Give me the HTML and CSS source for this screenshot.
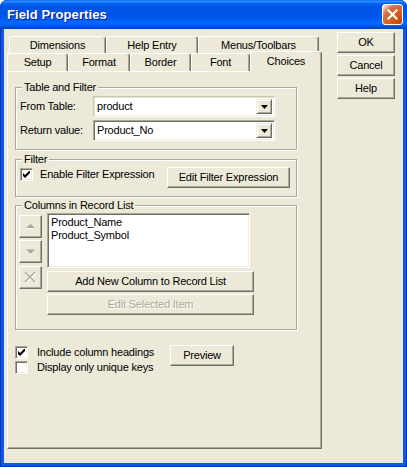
FILE: index.html
```html
<!DOCTYPE html>
<html lang="en">
<head>
<meta charset="utf-8">
<title>Field Properties</title>
<link rel="stylesheet" href="styles.css">
</head>
<body>
<div class="window">
  <header class="titlebar">
    <span class="title">Field Properties</span>
    <button class="close" aria-label="Close">
      <svg width="11" height="11" viewBox="0 0 11 11"><path d="M1.5 1.5 L9.5 9.5 M9.5 1.5 L1.5 9.5" stroke="#fff" stroke-width="2.2" stroke-linecap="square"/></svg>
    </button>
  </header>
  <div class="client">
    <div class="tabctl">
      <div class="tabrow tabrow-back">
        <div class="tab w-dim">Dimensions</div>
        <div class="tab w-help">Help Entry</div>
        <div class="tab w-menus">Menus/Toolbars</div>
      </div>
      <div class="tabrow tabrow-front">
        <div class="tab w-setup">Setup</div>
        <div class="tab w-format">Format</div>
        <div class="tab w-border">Border</div>
        <div class="tab w-font">Font</div>
        <div class="tab tab-active w-choices">Choices</div>
      </div>
      <div class="panel">
        <fieldset class="group">
          <legend>Table and Filter</legend>
          <div class="field-grid">
            <label class="field-label">From Table:</label>
            <div class="combo combo-plain">
              <span class="combo-value">product</span>
              <span class="combo-drop"><svg width="7" height="4" viewBox="0 0 7 4"><path d="M0 0 H7 L3.5 4 Z" fill="#000"/></svg></span>
            </div>
            <label class="field-label">Return value:</label>
            <div class="combo">
              <span class="combo-value">Product_No</span>
              <span class="combo-drop"><svg width="7" height="4" viewBox="0 0 7 4"><path d="M0 0 H7 L3.5 4 Z" fill="#000"/></svg></span>
            </div>
          </div>
        </fieldset>

        <fieldset class="group group-filter">
          <legend>Filter</legend>
          <div class="filter-row">
            <label class="check check-filter">
              <span class="check-box"><svg width="7" height="7" viewBox="0 0 7 7"><path d="M0 2 L2 4 L6 0 L7 0 L7 2 L2 7 L0 5 Z" fill="#000"/></svg></span>
              <span>Enable Filter Expression</span>
            </label>
            <button class="btn btn-filter">Edit Filter Expression</button>
          </div>
        </fieldset>

        <fieldset class="group group-columns">
          <legend>Columns in Record List</legend>
          <div class="columns-grid">
            <div class="mover">
              <button class="btn btn-icon" aria-label="Move up"><svg width="9" height="6" viewBox="0 0 9 6"><path d="M1 5 L4.5 1.5 L8 5 Z" fill="#fff"/><path d="M0 4 L4.5 0 L9 4 Z" fill="#ACA899"/></svg></button>
              <button class="btn btn-icon" aria-label="Move down"><svg width="9" height="6" viewBox="0 0 9 6"><path d="M1 2 L8 2 L4.5 6 Z" fill="#fff"/><path d="M0 0.5 L9 0.5 L4.5 5 Z" fill="#ACA899"/></svg></button>
              <button class="btn btn-icon btn-remove" aria-label="Remove"><svg width="13" height="13" viewBox="0 0 13 13"><path d="M2 2 L12 12 M12 2 L2 12" stroke="#fff" stroke-width="1.4"/><path d="M1 1 L11 11 M11 1 L1 11" stroke="#ACA899" stroke-width="1.4"/></svg></button>
            </div>
            <div class="columns-main">
              <ul class="listbox">
                <li>Product_Name</li>
                <li>Product_Symbol</li>
              </ul>
              <button class="btn btn-wide btn-add">Add New Column to Record List</button>
              <button class="btn btn-wide btn-edit" disabled>Edit Selected Item</button>
            </div>
          </div>
        </fieldset>

        <div class="options">
          <div class="option-checks">
            <label class="check">
              <span class="check-box"><svg width="7" height="7" viewBox="0 0 7 7"><path d="M0 2 L2 4 L6 0 L7 0 L7 2 L2 7 L0 5 Z" fill="#000"/></svg></span>
              <span>Include column headings</span>
            </label>
            <label class="check">
              <span class="check-box"></span>
              <span>Display only unique keys</span>
            </label>
          </div>
          <button class="btn btn-preview">Preview</button>
        </div>
      </div>
    </div>

    <div class="side">
      <button class="btn btn-side">OK</button>
      <button class="btn btn-side">Cancel</button>
      <button class="btn btn-side">Help</button>
    </div>
  </div>
</div>
</body>
</html>
```

FILE: styles.css
```css
* { box-sizing: border-box; }

html, body {
  margin: 0;
  padding: 0;
  background: #fff;
}

body {
  font-family: "Liberation Sans", Arial, sans-serif;
  font-size: 11px;
  line-height: 13px;
  letter-spacing: -0.2px;
  color: #000;
  overflow: hidden;
}

/* ---------- window frame ---------- */
.window {
  width: 407px;
  height: 467px;
  display: flex;
  flex-direction: column;
  padding: 0 4px 4px;
  background: #0A5AE8;
  border-radius: 7px 7px 0 0;
  box-shadow: inset 0 0 0 1px #0030B8;
  overflow: hidden;
}

.titlebar {
  height: 29px;
  margin: 0 -4px;
  display: flex;
  align-items: center;
  padding: 0 4px 0 7px;
  border-radius: 7px 7px 0 0;
  background: linear-gradient(to bottom,
    #0058EE 0%, #3593FF 4%, #288EFF 6%, #127DFF 8%, #036FFC 10%,
    #0262EE 14%, #0057E5 20%, #0054E3 24%, #0055EB 56%, #005BF5 66%,
    #026AFE 76%, #0062EF 86%, #0052D6 92%, #0048C8 96%, #0046C4 100%);
}

.title {
  flex: 1;
  color: #fff;
  font-weight: bold;
  font-size: 13px;
  letter-spacing: 0.1px;
  text-shadow: 1px 1px #0F1E89;
}

.close {
  width: 21px;
  height: 21px;
  padding: 0;
  display: flex;
  align-items: center;
  justify-content: center;
  border: 1px solid #fff;
  border-radius: 3px;
  background: radial-gradient(circle at 90% 90%, #CC4600 0%, #DC6527 55%, #CD7546 70%, #FFCCB2 90%, #fff 100%);
}

.client {
  flex: 1;
  display: flex;
  align-items: flex-start;
  padding: 3px 0 0 3px;
  background: #ECE9D8;
}

/* ---------- tab control ---------- */
.tabctl {
  width: 315px;
  margin-top: 4px;
}

.tabrow {
  display: flex;
}

.tabrow-back {
  height: 17px;
  padding-left: 2px;
}

.tabrow-front {
  height: 18px;
  align-items: flex-end;
}

.tab {
  height: 100%;
  display: flex;
  align-items: center;
  justify-content: center;
  background: #ECE9D8;
  border: 1px solid;
  border-color: #fff #716F64 transparent #fff;
  border-bottom: 0;
  border-radius: 3px 3px 0 0;
  box-shadow: inset -1px 0 #ACA899;
  white-space: nowrap;
}

.tabrow-front .tab { height: 18px; }

.tab-active {
  position: relative;
  z-index: 2;
  height: 21px !important;
  margin-bottom: -1px;
  padding-bottom: 1px;
}

.w-dim { width: 97px; }
.w-help { width: 92px; }
.w-menus { width: 121px; }
.w-setup { width: 61px; }
.w-format { width: 62px; }
.w-border { width: 61px; }
.w-font { width: 59px; }
.w-choices { width: 72px; }

.panel {
  height: 378px;
  padding: 9px 0 0 7px;
  border: 1px solid;
  border-color: #fff #716F64 #716F64 #fff;
  box-shadow: inset -1px -1px #ACA899;
}

/* ---------- group boxes ---------- */
.group {
  width: 282px;
  margin: 0;
  padding: 0;
  min-inline-size: 0;
  border: 1px solid #ACA899;
  box-shadow: inset 1px 1px #fff, 1px 1px #fff;
}

.group legend {
  margin-left: 6px;
  padding: 0 2px;
  line-height: 13px;
  background: #ECE9D8;
}

.group-filter { margin-top: 3px; }
.group-columns { margin-top: 2px; }

.field-grid {
  display: grid;
  grid-template-columns: 73px 182px;
  row-gap: 3px;
  align-items: center;
  padding: 2px 0 8px 4px;
}

.field-label { white-space: nowrap; }

/* sunken edit/combo field */
.combo {
  height: 21px;
  display: flex;
  align-items: stretch;
  background: #fff;
  border: 1px solid;
  border-color: #ACA899 #fff #fff #ACA899;
  box-shadow: inset 1px 1px #716F64, inset -1px -1px #F1EFE2;
  padding: 2px;
}

.combo-plain {
  border-color: #C8C5B6 #fff #fff #C8C5B6;
  box-shadow: inset 1px 1px #E4E1D3, inset -1px -1px #F1EFE2;
}

.combo-value {
  flex: 1;
  padding-left: 1px;
  display: flex;
  align-items: center;
}

.combo-drop {
  width: 16px;
  display: flex;
  align-items: center;
  justify-content: center;
  background: #ECE9D8;
  border: 1px solid;
  border-color: #F1EFE2 #716F64 #716F64 #F1EFE2;
  box-shadow: inset 1px 1px #fff, inset -1px -1px #ACA899;
}

/* ---------- buttons ---------- */
.btn {
  font: inherit;
  letter-spacing: inherit;
  height: 21px;
  padding: 0;
  color: #000;
  background: #ECE9D8;
  border: 1px solid;
  border-color: #fff #716F64 #716F64 #fff;
  box-shadow: inset -1px -1px #ACA899;
  text-align: center;
}

.btn:disabled {
  color: #ACA899;
  text-shadow: 1px 1px #fff;
}

.filter-row {
  display: flex;
  align-items: flex-start;
  padding: 1px 6px 8px 4px;
}

.btn-filter {
  width: 123px;
  margin-left: auto;
}

/* ---------- checkboxes ---------- */
.check {
  display: flex;
  align-items: center;
  height: 13px;
  gap: 9px;
  white-space: nowrap;
}

.check-filter {
  margin-top: 1px;
  gap: 7px;
}

.check-box {
  width: 13px;
  height: 13px;
  flex: none;
  display: flex;
  align-items: center;
  justify-content: center;
  background: #fff;
  border: 1px solid;
  border-color: #ACA899 #fff #fff #ACA899;
  box-shadow: inset 1px 1px #716F64, inset -1px -1px #F1EFE2;
}

/* ---------- record list columns ---------- */
.columns-grid {
  display: flex;
  gap: 5px;
  padding: 1px 0 14px 3px;
}

.mover {
  display: flex;
  flex-direction: column;
  gap: 2px;
  padding-top: 2px;
}

.btn-icon {
  width: 23px;
  height: 23px;
  display: flex;
  align-items: center;
  justify-content: center;
}

.btn-remove { margin-top: 1px; }

.columns-main {
  display: flex;
  flex-direction: column;
}

.listbox {
  width: 203px;
  height: 55px;
  margin: 0;
  padding: 2px 0 0 3px;
  list-style: none;
  background: #fff;
  border: 1px solid;
  border-color: #ACA899 #fff #fff #ACA899;
  box-shadow: inset 1px 1px #716F64, inset -1px -1px #F1EFE2;
}

.listbox li { line-height: 13px; }

.btn-wide { width: 207px; }
.btn-add { margin-top: 3px; }
.btn-edit { margin-top: 2px; }

/* ---------- bottom options ---------- */
.options {
  display: flex;
  align-items: flex-start;
  margin-top: 15px;
}

.option-checks {
  width: 155px;
  display: flex;
  flex-direction: column;
  gap: 2px;
  margin-top: 1px;
}

.btn-preview { width: 64px; }

/* ---------- dialog command buttons ---------- */
.side {
  display: flex;
  flex-direction: column;
  gap: 2px;
  margin-left: 15px;
}

.btn-side { width: 58px; }
```
